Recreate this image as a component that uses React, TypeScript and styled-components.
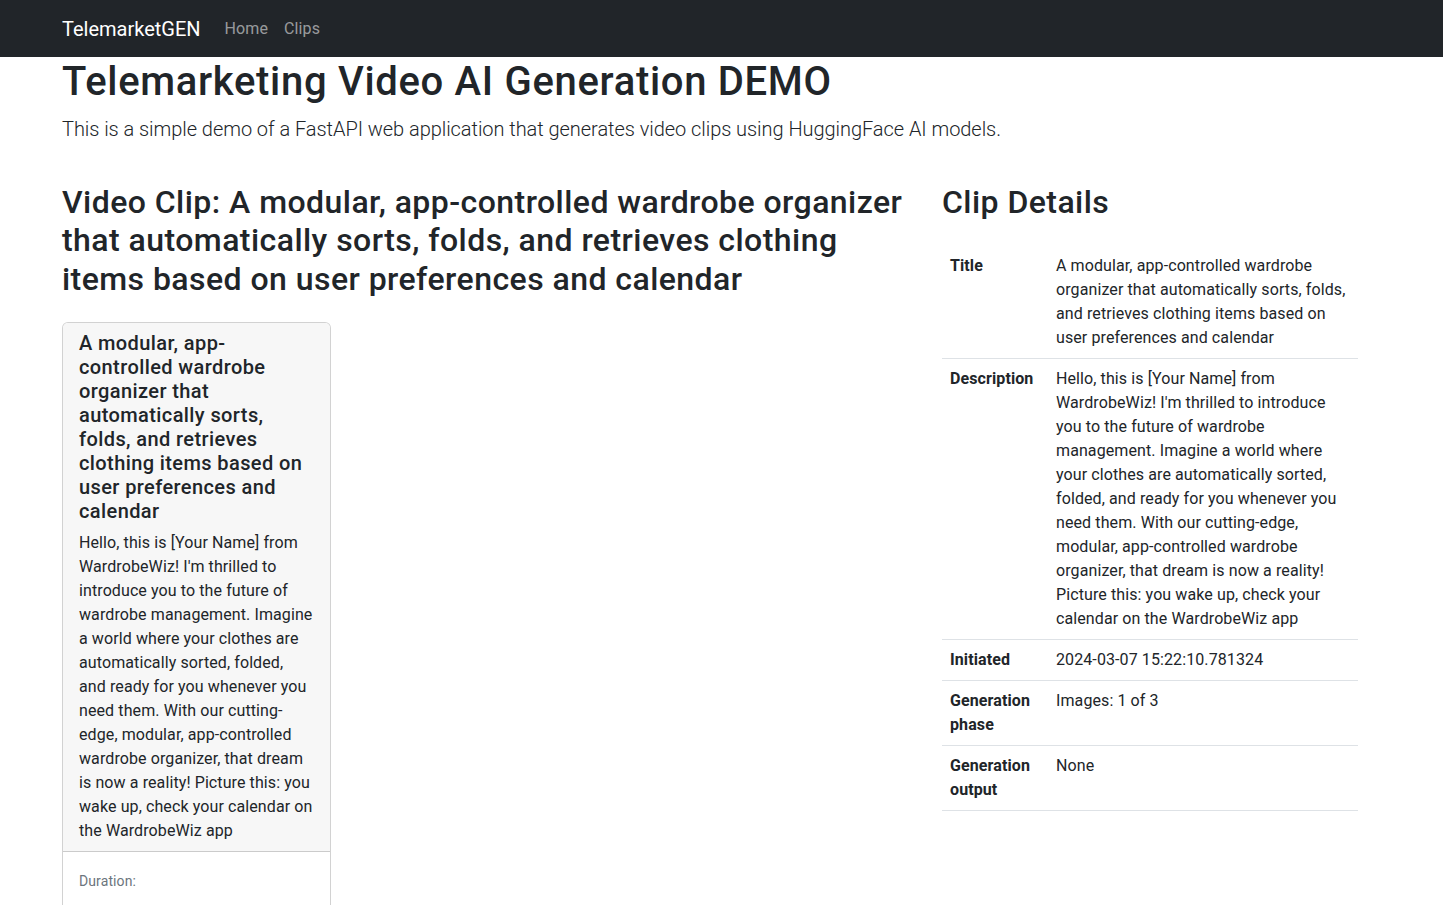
import React from "react";
import styled, { createGlobalStyle } from "styled-components";

const GlobalStyle = createGlobalStyle`
  *, *::before, *::after { box-sizing: border-box; }
  body {
    margin: 0;
    font-family: Roboto, "Noto Sans", sans-serif;
    font-size: 16px;
    line-height: 1.5;
    letter-spacing: 0.1px;
    color: #212529;
    background: #fff;
    -webkit-font-smoothing: antialiased;
  }
`;

const Navbar = styled.nav`
  background: #212529;
  height: 57px;
  display: flex;
  align-items: center;
`;

const NavInner = styled.div`
  width: 1296px;
  margin-left: 62px;
  display: flex;
  align-items: center;
`;

const Brand = styled.a`
  font-size: 20px;
  line-height: 30px;
  color: #fff;
  text-decoration: none;
  margin-right: 16px;
  padding: 5px 0;
  letter-spacing: 0;
`;

const NavList = styled.ul`
  display: flex;
  list-style: none;
  margin: 0;
  padding: 0;
`;

const NavLink = styled.a`
  display: block;
  padding: 8px;
  line-height: 24px;
  color: rgba(255, 255, 255, 0.55);
  text-decoration: none;
`;

const Container = styled.main`
  width: 1296px;
  margin-left: 62px;
`;

const Title = styled.h1`
  font-size: 40px;
  font-weight: 500;
  line-height: 1.2;
  letter-spacing: 0.017em;
  margin: 1px 0 8px;
`;

const Lead = styled.p`
  font-size: 20px;
  font-weight: 300;
  line-height: 30px;
  letter-spacing: -0.05px;
  margin: 0 0 16px;
`;

const Grid = styled.div`
  display: grid;
  grid-template-columns: 856px 416px;
  column-gap: 24px;
  margin-top: 39px;
  align-items: start;
`;

const Heading = styled.h2`
  font-size: 32px;
  font-weight: 500;
  line-height: 1.2;
  letter-spacing: 0.014em;
  margin: 0 0 8px;
`;

const Cards = styled.div`
  display: grid;
  grid-template-columns: 269px;
  margin-top: 24px;
`;

const Card = styled.div`
  border: 1px solid rgba(0, 0, 0, 0.175);
  border-radius: 6px;
  overflow: hidden;
  background: #fff;
`;

const CardHeader = styled.div`
  background: #f7f7f7;
  border-bottom: 1px solid rgba(0, 0, 0, 0.175);
  padding: 8px 16px;
`;

const CardTitle = styled.h5`
  font-size: 20px;
  font-weight: 500;
  line-height: 24px;
  letter-spacing: 0.02em;
  margin: 0 0 8px;
`;

const CardText = styled.p`
  margin: 0;
  line-height: 24px;
`;

const CardBody = styled.div`
  padding: 17px 16px 16px;
`;

const Muted = styled.p`
  margin: 0 0 4px;
  font-size: 14px;
  line-height: 24px;
  color: #6c757d;
`;

const Table = styled.table`
  width: 416px;
  margin-top: 25px;
  border-collapse: collapse;
  table-layout: fixed;
`;

const Th = styled.th`
  width: 106px;
  text-align: left;
  vertical-align: top;
  font-weight: 700;
  padding: 8px;
  line-height: 24px;
  border-bottom: 1px solid #dee2e6;
`;

const Td = styled.td`
  vertical-align: top;
  padding: 8px;
  line-height: 24px;
  border-bottom: 1px solid #dee2e6;
`;

const clipTitle =
  "A modular, app-controlled wardrobe organizer that automatically sorts, folds, and retrieves clothing items based on user preferences and calendar";
const description =
  "Hello, this is [Your Name] from WardrobeWiz! I'm thrilled to introduce you to the future of wardrobe management. Imagine a world where your clothes are automatically sorted, folded, and ready for you whenever you need them. With our cutting-edge, modular, app-controlled wardrobe organizer, that dream is now a reality! Picture this: you wake up, check your calendar on the WardrobeWiz app";

const details: [string, string][] = [
  ["Title", clipTitle],
  ["Description", description],
  ["Initiated", "2024-03-07 15:22:10.781324"],
  ["Generation phase", "Images: 1 of 3"],
  ["Generation output", "None"],
];

export default function App() {
  return (
    <>
      <GlobalStyle />
      <Navbar>
        <NavInner>
          <Brand href="#">TelemarketGEN</Brand>
          <NavList>
            <li><NavLink href="#">Home</NavLink></li>
            <li><NavLink href="#">Clips</NavLink></li>
          </NavList>
        </NavInner>
      </Navbar>
      <Container>
        <Title>Telemarketing Video AI Generation DEMO</Title>
        <Lead>
          This is a simple demo of a FastAPI web application that generates video clips using HuggingFace AI models.
        </Lead>
        <Grid>
          <section>
            <Heading>Video Clip: {clipTitle}</Heading>
            <Cards>
              <Card>
                <CardHeader>
                  <CardTitle>{clipTitle}</CardTitle>
                  <CardText>{description}</CardText>
                </CardHeader>
                <CardBody>
                  <Muted>Duration:</Muted>
                </CardBody>
              </Card>
            </Cards>
          </section>
          <section>
            <Heading>Clip Details</Heading>
            <Table>
              <tbody>
                {details.map(([k, v]) => (
                  <tr key={k}>
                    <Th>{k}</Th>
                    <Td>{v}</Td>
                  </tr>
                ))}
              </tbody>
            </Table>
          </section>
        </Grid>
      </Container>
    </>
  );
}
